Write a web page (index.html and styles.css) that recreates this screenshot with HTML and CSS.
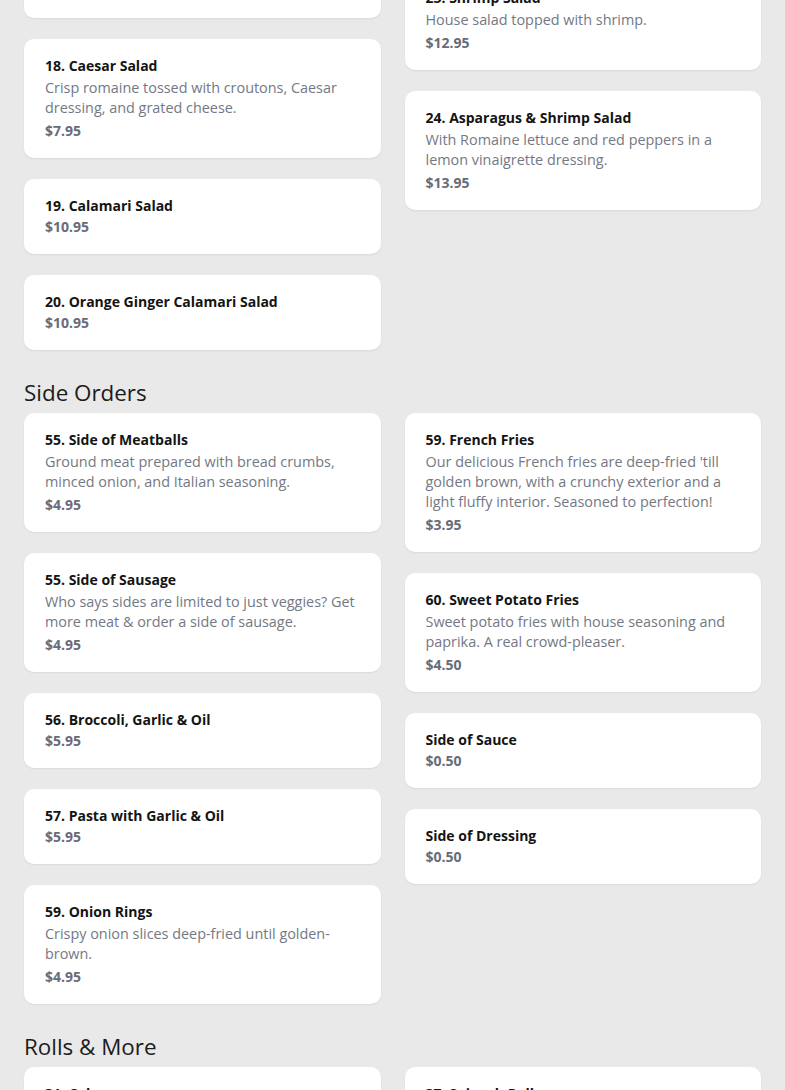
FILE: index.html
```html
<!DOCTYPE html>
<html lang="en">
<head>
<meta charset="utf-8">
<title>Menu</title>
<link rel="stylesheet" href="styles.css">
</head>
<body>
<main class="menu">
  <section class="section">
    <h2 class="section-title">Salads</h2>
    <div class="columns">
      <div class="column">
        <article class="card">
          <h3 class="item-name">16. House Salad</h3>
          <p class="item-desc">Fresh garden greens, tomato and onion.</p>
          <p class="item-price">$6.95</p>
        </article>
        <article class="card">
          <h3 class="item-name">17. Antipasto Salad</h3>
          <p class="item-desc">House salad topped with ham, salami, provolone cheese and olives.</p>
          <p class="item-price">$9.95</p>
        </article>
        <article class="card">
          <h3 class="item-name">18. Caesar Salad</h3>
          <p class="item-desc">Crisp romaine tossed with croutons, Caesar dressing, and grated cheese.</p>
          <p class="item-price">$7.95</p>
        </article>
        <article class="card">
          <h3 class="item-name">19. Calamari Salad</h3>
          <p class="item-price">$10.95</p>
        </article>
        <article class="card">
          <h3 class="item-name">20. Orange Ginger Calamari Salad</h3>
          <p class="item-price">$10.95</p>
        </article>
      </div>
      <div class="column">
        <article class="card">
          <h3 class="item-name">21. Grilled Chicken Salad</h3>
          <p class="item-price">$10.95</p>
        </article>
        <article class="card">
          <h3 class="item-name">22. Chicken Caesar Salad</h3>
          <p class="item-price">$10.95</p>
        </article>
        <article class="card">
          <h3 class="item-name">23. Shrimp Salad</h3>
          <p class="item-desc">House salad topped with shrimp.</p>
          <p class="item-price">$12.95</p>
        </article>
        <article class="card">
          <h3 class="item-name">24. Asparagus &amp; Shrimp Salad</h3>
          <p class="item-desc">With Romaine lettuce and red peppers in a lemon vinaigrette dressing.</p>
          <p class="item-price">$13.95</p>
        </article>
      </div>
    </div>
  </section>

  <section class="section">
    <h2 class="section-title">Side Orders</h2>
    <div class="columns">
      <div class="column">
        <article class="card">
          <h3 class="item-name">55. Side of Meatballs</h3>
          <p class="item-desc">Ground meat prepared with bread crumbs, minced onion, and Italian seasoning.</p>
          <p class="item-price">$4.95</p>
        </article>
        <article class="card">
          <h3 class="item-name">55. Side of Sausage</h3>
          <p class="item-desc">Who says sides are limited to just veggies? Get more meat &amp; order a side of sausage.</p>
          <p class="item-price">$4.95</p>
        </article>
        <article class="card">
          <h3 class="item-name">56. Broccoli, Garlic &amp; Oil</h3>
          <p class="item-price">$5.95</p>
        </article>
        <article class="card">
          <h3 class="item-name">57. Pasta with Garlic &amp; Oil</h3>
          <p class="item-price">$5.95</p>
        </article>
        <article class="card">
          <h3 class="item-name">59. Onion Rings</h3>
          <p class="item-desc">Crispy onion slices deep-fried until golden-brown.</p>
          <p class="item-price">$4.95</p>
        </article>
      </div>
      <div class="column">
        <article class="card">
          <h3 class="item-name">59. French Fries</h3>
          <p class="item-desc">Our delicious French fries are deep-fried 'till golden brown, with a crunchy exterior and a light fluffy interior. Seasoned to perfection!</p>
          <p class="item-price">$3.95</p>
        </article>
        <article class="card">
          <h3 class="item-name">60. Sweet Potato Fries</h3>
          <p class="item-desc">Sweet potato fries with house seasoning and paprika. A real crowd-pleaser.</p>
          <p class="item-price">$4.50</p>
        </article>
        <article class="card">
          <h3 class="item-name">Side of Sauce</h3>
          <p class="item-price">$0.50</p>
        </article>
        <article class="card">
          <h3 class="item-name">Side of Dressing</h3>
          <p class="item-price">$0.50</p>
        </article>
      </div>
    </div>
  </section>

  <section class="section">
    <h2 class="section-title">Rolls &amp; More</h2>
    <div class="columns">
      <div class="column">
        <article class="card">
          <h3 class="item-name">31. Calzone</h3>
          <p class="item-desc">Ricotta and mozzarella cheese baked in our fresh dough.</p>
          <p class="item-price">$8.95</p>
        </article>
      </div>
      <div class="column">
        <article class="card">
          <h3 class="item-name">37. Spinach Roll</h3>
          <p class="item-desc">Spinach, garlic and mozzarella rolled in our fresh dough.</p>
          <p class="item-price">$8.95</p>
        </article>
      </div>
    </div>
  </section>
</main>
</body>
</html>
```

FILE: styles.css
```css
html, body {
  margin: 0;
  padding: 0;
  background: #e9e9e9;
}

body {
  font-family: "Open Sans", "Liberation Sans", Arial, sans-serif;
  color: #1a1a1a;
  overflow: hidden;
}

/* the page is shown scrolled: the Salads heading and first cards sit above the fold */
.menu {
  padding: 0 24px 40px;
  margin-top: -257px;
  display: flex;
  flex-direction: column;
  gap: 27px;
}

.section-title {
  margin: 0 0 4px;
  font-size: 22.4px;
  line-height: 32px;
  font-weight: 400;
  color: #1c1c1c;
}

.columns {
  display: grid;
  grid-template-columns: 1fr 1fr;
  column-gap: 24px;
  align-items: start;
}

.column {
  display: flex;
  flex-direction: column;
  gap: 21px;
}

.card {
  display: flex;
  flex-direction: column;
  background: #ffffff;
  border-radius: 10px;
  padding: 16px 21px 17px;
  box-shadow: 0 1px 2px rgba(0, 0, 0, 0.07);
}

.item-name {
  margin: 0 0 1px;
  font-size: 14px;
  line-height: 21px;
  font-weight: 700;
  color: #141414;
}

.item-desc {
  margin: 1px 0 3px;
  font-size: 14.4px;
  line-height: 20px;
  color: #737884;
}

.item-price {
  margin: 0;
  font-size: 14px;
  line-height: 20px;
  font-weight: 700;
  color: #676c78;
}
```
